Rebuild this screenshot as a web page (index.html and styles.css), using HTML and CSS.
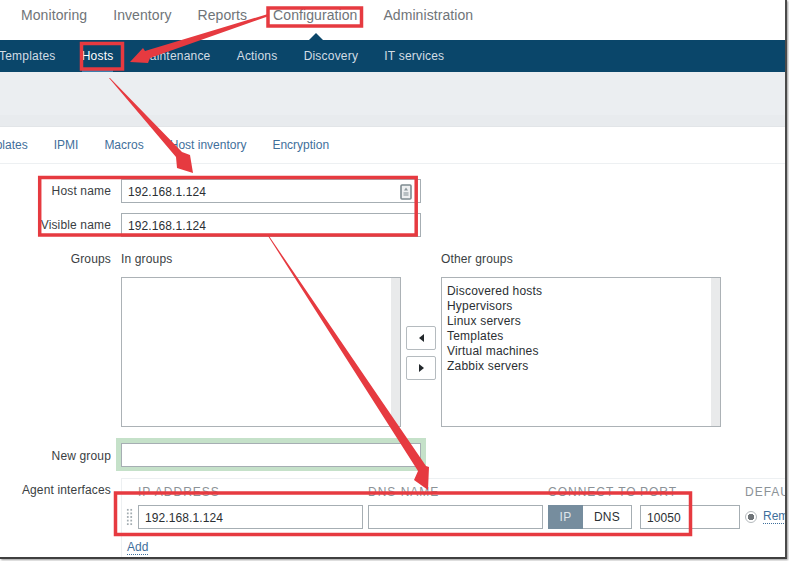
FILE: index.html
```html
<!DOCTYPE html>
<html lang="en">
<head>
<meta charset="utf-8">
<title>Host configuration</title>
<link rel="stylesheet" href="styles.css">
</head>
<body>
<div class="shot">
  <nav class="top-nav">
    <a>Monitoring</a><a>Inventory</a><a>Reports</a><a>Configuration</a><a>Administration</a>
  </nav>
  <nav class="sub-nav">
    <span class="caret"></span>
    <a>Templates</a><a class="active">Hosts</a><a>Maintenance</a><a>Actions</a><a>Discovery</a><a>IT services</a>
  </nav>
  <div class="band"></div>
  <nav class="tabs">
    <a>Templates</a><a>IPMI</a><a>Macros</a><a>Host inventory</a><a>Encryption</a>
  </nav>
  <form class="form">
    <label class="lbl">Host name</label>
    <div class="field wide">192.168.1.124
      <svg class="import" width="12" height="16" viewBox="0 0 12 16"><rect x="1" y="1" width="10" height="14" rx="1" fill="#eef0f1" stroke="#7d8a90" stroke-width="1.6"/><path d="M6 3.500 8 6.500H4Z" fill="#8c979c"/><path d="M3.500 9h5M3.500 11h5" stroke="#a5aeb2" stroke-width="1.400"/></svg>
    </div>
    <label class="lbl">Visible name</label>
    <div class="field wide">192.168.1.124</div>
    <label class="lbl groups-lbl">Groups</label>
    <div class="twin">
      <div class="col">
        <div class="col-head">In groups</div>
        <div class="listbox"></div>
      </div>
      <div class="moves">
        <button type="button" class="move"><span class="tri left"></span></button>
        <button type="button" class="move"><span class="tri right"></span></button>
      </div>
      <div class="col">
        <div class="col-head">Other groups</div>
        <div class="listbox">
          <ul>
            <li>Discovered hosts</li><li>Hypervisors</li><li>Linux servers</li><li>Templates</li><li>Virtual machines</li><li>Zabbix servers</li>
          </ul>
        </div>
      </div>
    </div>
    <label class="lbl newgroup-lbl">New group</label>
    <div class="halo"><div class="field"></div></div>
    <label class="lbl agent-lbl">Agent interfaces</label>
    <div class="ifaces">
      <div class="iface-head">
        <span class="h-ip">IP ADDRESS</span><span class="h-dns">DNS NAME</span><span class="h-conn">CONNECT TO</span><span class="h-port">PORT</span><span class="h-def">DEFAULT</span>
      </div>
      <div class="iface-row">
        <span class="grip"></span>
        <div class="field ip">192.168.1.124</div>
        <div class="field dns"></div>
        <div class="seg"><span class="on">IP</span><span>DNS</span></div>
        <div class="field port">10050</div>
        <span class="radio"></span>
        <a class="link">Remove</a>
      </div>
      <a class="link add">Add</a>
    </div>
  </form>
  <svg class="marks" width="785" height="557" viewBox="0 0 785 557">
    <g fill="none" stroke="#e63a40" stroke-width="3.500">
      <rect x="268" y="8" width="93.500" height="18"/>
      <rect x="81.500" y="43.500" width="41" height="25.500"/>
      <rect x="39.700" y="177.500" width="376.500" height="57.500"/>
      <rect x="115.500" y="493" width="575" height="41.500"/>
    </g>
    <g fill="#e63a40">
      <polygon points="268,14 269,16 150,58 148,63 130,62 143,48 145,51"/>
      <polygon points="109,78 110,78 182,152 190,155 193,173 177,168 176,157"/>
      <polygon points="268,236 269,236 426,466 429,467 428,490 414,480 418,471"/>
    </g>
  </svg>
</div>
</body>
</html>
```
FILE: styles.css
```css
* { box-sizing: border-box; }
html, body { margin: 0; padding: 0; background: #fff; }
body { width: 789px; height: 561px; overflow: hidden; font-family: "Liberation Sans", Arial, sans-serif; font-size: 12px; color: #2b2f33; }
.shot { position: relative; width: 787px; height: 559px; overflow: hidden; background: #fff; border-right: 2px solid #4a4a4a; border-bottom: 2px solid #3f3f3f; box-shadow: 1px 1px 2px #999; }
.top-nav { display: flex; height: 40px; padding: 7px 0 0 21px; gap: 26px; font-size: 14px; line-height: 16px; letter-spacing: .08px; color: #6f7478; }
.sub-nav { position: relative; display: flex; height: 32px; margin-left: -1px; gap: 26.200px; background: #0a466a; color: #d3dde5; line-height: 33px; letter-spacing: .2px; }
.sub-nav .active { color: #fff; box-shadow: inset 0 -2px 0 #3c7fae; }
.caret { position: absolute; left: 310px; top: -7px; border: 7px solid transparent; border-top: 0; border-bottom-color: #0a466a; }
.band { height: 55px; background: #ebeef1; border-bottom: 1px solid #e2e5e8; box-shadow: inset 0 -11px 0 #e8ebee; }
.tabs { display: flex; height: 37px; margin-left: -27px; gap: 26px; align-items: center; border-bottom: 1px solid #edf0f2; color: #3f6f9b; padding-bottom: 1px; }
.form { display: grid; grid-template-columns: 111px 664px; column-gap: 10px; padding-top: 15px; }
.lbl { text-align: right; line-height: 24px; white-space: nowrap; color: #3a3e42; letter-spacing: .15px; height: 24px; }
.field { position: relative; flex: none; height: 24px; border: 1px solid #a6aeb3; background: #fff; padding: 0 6px; line-height: 24px; font-size: 12px; letter-spacing: .1px; color: #2b2f33; }
.wide { width: 300px; margin-bottom: 10px; }
.import { position: absolute; right: 8px; top: 4px; }
.groups-lbl { margin-top: 0; }
.twin { display: flex; width: 600px; }
.col { width: 280px; }
.col-head { height: 30px; padding-top: 5px; line-height: 15px; letter-spacing: .15px; color: #3a3e42; }
.listbox { height: 150px; border: 1px solid #acb2b6; background: linear-gradient(to left, #e9eaeb 9px, #fff 9px); }
.listbox ul { margin: 0; padding: 6px 5px; list-style: none; line-height: 15px; letter-spacing: .2px; }
.moves { display: flex; flex-direction: column; justify-content: center; gap: 6px; width: 40px; padding: 1px 5px 0; margin-top: 30px; }
.move { display: flex; align-items: center; justify-content: center; width: 30px; height: 24px; padding: 0; background: #fff; border: 1px solid #b5bbbf; border-radius: 2px; }
.tri { width: 0; height: 0; border: 4px solid transparent; border-left-width: 5px; border-right-width: 5px; }
.tri.left { border-left: 0; border-right-color: #22272b; }
.tri.right { border-right: 0; border-left-color: #22272b; }
.newgroup-lbl { margin-top: 17px; }
.halo { width: 310px; height: 33px; margin: 11px 0 0 -5px; border: 5px solid #c5e1c9; border-bottom-width: 4px; }
.halo .field { width: 300px; height: 24px; }
.agent-lbl { margin-top: 7px; }
.ifaces { height: 100px; margin-top: 7px; border-left: 1px solid #edf0f2; border-top: 1px solid #edf0f2; overflow: hidden; }
.iface-head { display: flex; height: 26px; padding-left: 16px; line-height: 26px; font-size: 12px; letter-spacing: 1px; color: #8b9297; white-space: nowrap; }
.iface-head span { flex: none; }
.h-ip { width: 230px; }
.h-dns { width: 180px; }
.h-conn { width: 92px; }
.h-port { width: 105px; }
.iface-row { display: flex; align-items: center; height: 24px; padding-left: 4px; white-space: nowrap; }
.grip { flex: none; width: 7px; height: 18px; margin-right: 5px; background: radial-gradient(circle, #a3acb1 1px, transparent 1.200px) 0 0 / 3.500px 3.600px; }
.ip { width: 225px; margin-right: 5px; }
.dns { width: 175px; margin-right: 5px; }
.seg { display: flex; flex: none; width: 84px; height: 24px; margin-right: 8px; border: 1px solid #a6aeb3; line-height: 22px; text-align: center; letter-spacing: .3px; }
.seg span { flex: 1 1 50px; }
.seg .on { flex: 0 0 35px; background: #768d9e; color: #dfe6ea; margin: -1px 0 -1px -1px; line-height: 24px; }
.port { width: 100px; margin-right: 5px; }
.radio { flex: none; width: 12px; height: 12px; margin-right: 6px; border-radius: 50%; border: 1px solid #b5babd; background: radial-gradient(circle, #6f7478 3px, #fff 3.500px); }
.link { color: #3f6f9b; border-bottom: 1px dotted #3f6f9b; line-height: 13px; }
.add { display: inline-block; margin: 12px 0 0 5px; }
.marks { position: absolute; left: 0; top: 0; pointer-events: none; }
```
